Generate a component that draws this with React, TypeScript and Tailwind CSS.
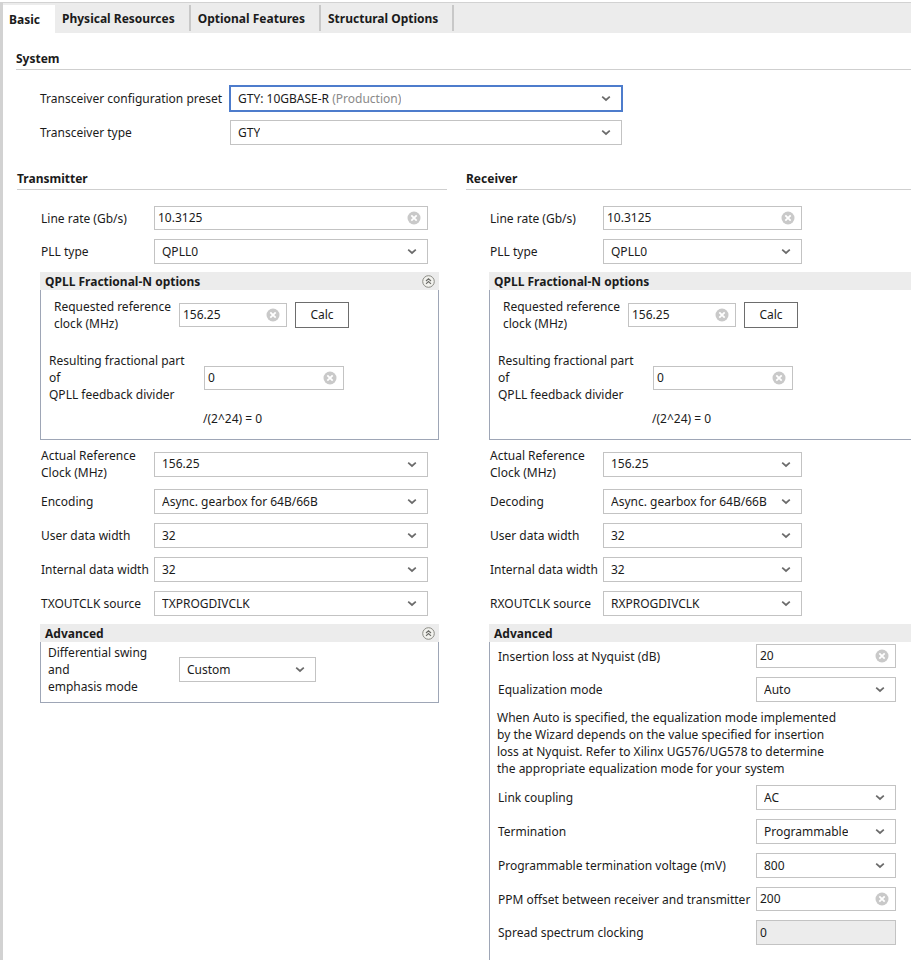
import type { ReactNode } from 'react';

const font = { fontFamily: '"Noto Sans", "Open Sans", sans-serif' };

function Chevron() {
  return (
    <svg width="10" height="7" viewBox="0 0 10 7" className="shrink-0">
      <path d="M1.2 1.6 L5 5 L8.8 1.6" fill="none" stroke="#6b6b6b" strokeWidth="1.7" />
    </svg>
  );
}

function ClearIcon() {
  return (
    <svg width="14" height="14" viewBox="0 0 14 14" className="shrink-0">
      <circle cx="7" cy="7" r="6.5" fill="#c9c9c9" />
      <path d="M4.3 4.3 L9.7 9.7 M9.7 4.3 L4.3 9.7" stroke="#fff" strokeWidth="1.8" />
    </svg>
  );
}

function CollapseIcon() {
  return (
    <svg width="13" height="13" viewBox="0 0 13 13" className="shrink-0">
      <circle cx="6.5" cy="6.5" r="5.8" fill="#f2f2ee" stroke="#8a8a84" strokeWidth="1" />
      <path d="M4 6 L6.5 3.8 L9 6 M4 8.8 L6.5 6.6 L9 8.8" fill="none" stroke="#6a6a66" strokeWidth="1.1" />
    </svg>
  );
}

// dropdown box
function Select({ value, w, h = 'h-[25px]', extra }: { value: ReactNode; w: string; h?: string; extra?: string }) {
  return (
    <div className={`${w} ${h} ${extra ?? 'border border-[#c3c3c3]'} bg-white flex items-center justify-between pl-[7px] pr-[10px] shrink-0`}>
      <span className="truncate">{value}</span>
      <Chevron />
    </div>
  );
}

// text field with clear button
function Field({ value, w, clear = true, disabled = false }: { value: string; w: string; clear?: boolean; disabled?: boolean }) {
  return (
    <div
      className={`${w} ${disabled ? 'h-[25px] bg-[#ececec]' : 'h-[24px] bg-white'} border border-[#c3c3c3] flex items-center justify-between pl-[3px] pr-[6px] shrink-0`}
    >
      <span>{value}</span>
      {clear && <ClearIcon />}
    </div>
  );
}

function Row({ label, lw, children, className = '' }: { label: ReactNode; lw: string; children: ReactNode; className?: string }) {
  return (
    <div className={`flex items-center ${className}`}>
      <div className={`${lw} shrink-0 leading-[17px]`}>{label}</div>
      {children}
    </div>
  );
}

function SectionHeader({ title }: { title: string }) {
  return <div className="font-bold leading-[17px] pb-[2px] border-b border-[#cfcfcf]">{title}</div>;
}

function GroupHeader({ title, icon = true }: { title: string; icon?: boolean }) {
  return (
    <div className="h-[18px] bg-[#ececec] flex items-center justify-between pl-[5px] pr-[4px] pt-px">
      <span className="font-bold">{title}</span>
      {icon && <CollapseIcon />}
    </div>
  );
}

function QpllGroup({ open }: { open: boolean }) {
  return (
    <div className={open ? 'ml-[23px] mt-[8px]' : 'ml-[23px] mt-[8px] w-[399px]'}>
      <GroupHeader title="QPLL Fractional-N options" icon={!open} />
      <div className={`h-[150px] border-l border-b border-[#9ea6b6] ${open ? '' : 'border-r'}`}>
        <div className="flex items-center pt-[8px]">
          <div className="w-[138px] pl-[13px] leading-[17px] shrink-0">
            Requested reference
            <br />
            clock (MHz)
          </div>
          <Field value="156.25" w="w-[108px]" />
          <div className="ml-[8px] w-[54px] h-[26px] border border-[#6d6d6d] flex items-center justify-center">Calc</div>
        </div>
        <div className="flex items-center mt-[20px]">
          <div className="w-[163px] pl-[8px] leading-[17px] shrink-0">
            Resulting fractional part
            <br />
            of
            <br />
            QPLL feedback divider
          </div>
          <Field value="0" w="w-[140px]" />
        </div>
        <div className="pl-[162px] mt-[7px] leading-[17px]">/(2^24) = 0</div>
      </div>
    </div>
  );
}

function CommonRows({ side, inputW }: { side: 'tx' | 'rx'; inputW: string }) {
  const tx = side === 'tx';
  return (
    <div className="pl-[24px] mt-[7px]">
      <Row
        lw="w-[113px]"
        label={
          <>
            Actual Reference
            <br />
            Clock (MHz)
          </>
        }
      >
        <Select value="156.25" w={inputW} />
      </Row>
      <Row lw="w-[113px]" label={tx ? 'Encoding' : 'Decoding'} className="mt-[8px]">
        <Select value="Async. gearbox for 64B/66B" w={inputW} />
      </Row>
      <Row lw="w-[113px]" label="User data width" className="mt-[9px]">
        <Select value="32" w={inputW} />
      </Row>
      <Row lw="w-[113px]" label="Internal data width" className="mt-[9px]">
        <Select value="32" w={inputW} />
      </Row>
      <Row lw="w-[113px]" label={tx ? 'TXOUTCLK source' : 'RXOUTCLK source'} className="mt-[9px]">
        <Select value={tx ? 'TXPROGDIVCLK' : 'RXPROGDIVCLK'} w={inputW} />
      </Row>
    </div>
  );
}

function TopRows({ inputW }: { inputW: string }) {
  return (
    <div className="pl-[24px] mt-[16px]">
      <Row lw="w-[113px]" label="Line rate (Gb/s)">
        <Field value="10.3125" w={inputW} />
      </Row>
      <Row lw="w-[113px]" label="PLL type" className="mt-[9px]">
        <Select value="QPLL0" w={inputW} />
      </Row>
    </div>
  );
}

function Transmitter() {
  return (
    <div className="w-[430px] shrink-0">
      <SectionHeader title="Transmitter" />
      <TopRows inputW="w-[274px]" />
      <QpllGroup open={false} />
      <CommonRows side="tx" inputW="w-[274px]" />
      <div className="ml-[23px] mt-[8px] w-[399px]">
        <GroupHeader title="Advanced" />
        <div className="h-[61px] border-l border-r border-b border-[#9ea6b6] flex items-start">
          <div className="w-[138px] pl-[7px] pt-[2px] leading-[17px] shrink-0">
            Differential swing
            <br />
            and
            <br />
            emphasis mode
          </div>
          <div className="mt-[15px]">
            <Select value="Custom" w="w-[137px]" />
          </div>
        </div>
      </div>
    </div>
  );
}

const rxAdvanced: { label: string; kind: 'field' | 'select' | 'disabled'; value: string; mt: string }[] = [
  { label: 'Link coupling', kind: 'select', value: 'AC', mt: 'mt-[8px]' },
  { label: 'Termination', kind: 'select', value: 'Programmable', mt: 'mt-[9px]' },
  { label: 'Programmable termination voltage (mV)', kind: 'select', value: '800', mt: 'mt-[9px]' },
  { label: 'PPM offset between receiver and transmitter', kind: 'field', value: '200', mt: 'mt-[9px]' },
  { label: 'Spread spectrum clocking', kind: 'disabled', value: '0', mt: 'mt-[9px]' },
];

function Receiver() {
  return (
    <div className="flex-1 min-w-0">
      <SectionHeader title="Receiver" />
      <TopRows inputW="w-[199px]" />
      <QpllGroup open />
      <CommonRows side="rx" inputW="w-[199px]" />
      <div className="ml-[23px] mt-[8px]">
        <GroupHeader title="Advanced" icon={false} />
        <div className="border-l border-[#9ea6b6] pl-[8px] pt-[2px] pb-[20px]">
          <Row lw="w-[258px]" label="Insertion loss at Nyquist (dB)">
            <Field value="20" w="w-[140px]" />
          </Row>
          <Row lw="w-[258px]" label="Equalization mode" className="mt-[9px]">
            <Select value="Auto" w="w-[140px]" />
          </Row>
          <div className="mt-[7px] leading-[17px] -ml-px">
            When Auto is specified, the equalization mode implemented
            <br />
            by the Wizard depends on the value specified for insertion
            <br />
            loss at Nyquist. Refer to Xilinx UG576/UG578 to determine
            <br />
            the appropriate equalization mode for your system
          </div>
          {rxAdvanced.map((r) => (
            <Row key={r.label} lw="w-[258px]" label={r.label} className={r.mt}>
              {r.kind === 'select' && <Select value={r.value} w="w-[140px]" />}
              {r.kind === 'field' && <Field value={r.value} w="w-[140px]" />}
              {r.kind === 'disabled' && <Field value={r.value} w="w-[140px]" clear={false} disabled />}
            </Row>
          ))}
        </div>
      </div>
    </div>
  );
}

const tabs = ['Physical Resources', 'Optional Features', 'Structural Options'];

export default function App() {
  return (
    <div className="w-[911px] h-[960px] overflow-hidden bg-white text-[12px] text-[#1b1b1b] pt-[2px]" style={font}>
      <div className="h-full border-l-[3px] border-t border-[#d2d2d2] flex flex-col">
        {/* tabs */}
        <div className="h-[30px] bg-[#ececec] flex items-end shrink-0">
          <div className="h-[28px] w-[52px] bg-white font-bold flex items-center pl-[6px] pt-px">Basic</div>
          {tabs.map((t) => (
            <div key={t} className="h-[26px] flex items-center font-bold pl-[7px] pr-[14px] border-r-2 border-[#c8c8c8] mb-[2px] pt-[2px]">
              {t}
            </div>
          ))}
        </div>

        {/* system */}
        <div className="pl-[13px] mt-[17px]">
          <SectionHeader title="System" />
          <div className="pl-[24px] mt-[15px]">
            <Row lw="w-[189px]" label="Transceiver configuration preset">
              <Select
                value={
                  <>
                    GTY: 10GBASE-R <span className="text-[#8a8a8a]">(Production)</span>
                  </>
                }
                w="w-[394px]"
                h="h-[27px]"
                extra="border-2 border-[#4d7ccc]"
              />
            </Row>
            <Row lw="w-[190px]" label="Transceiver type" className="mt-[8px]">
              <Select value="GTY" w="w-[392px]" />
            </Row>
          </div>
        </div>

        {/* transmitter / receiver */}
        <div className="flex pl-[14px] mt-[25px] gap-[19px]">
          <Transmitter />
          <Receiver />
        </div>
      </div>
    </div>
  );
}
